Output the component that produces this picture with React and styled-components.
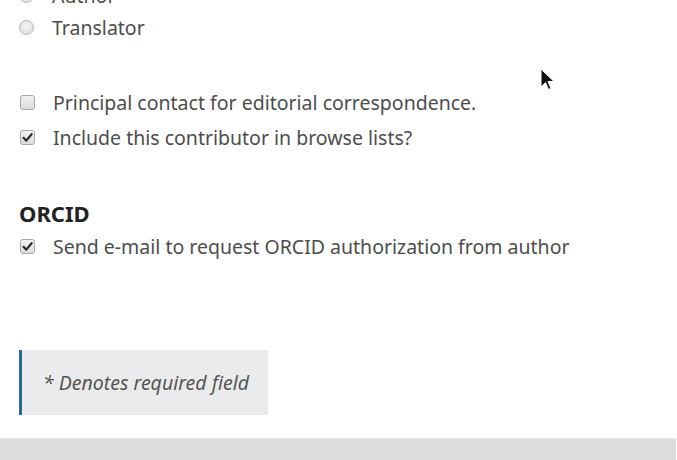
import React from "react";
import styled, { createGlobalStyle } from "styled-components";

const Global = createGlobalStyle`
  html, body { margin: 0; padding: 0; background: #fff; }
  body { font-family: "Noto Sans", "Open Sans", sans-serif; overflow: hidden; }
`;

const Viewport = styled.div`
  position: relative;
  width: 677px;
  height: 460px;
  overflow: hidden;
  background: #fff;
`;

const Content = styled.div`
  width: 676px;
  display: flex;
  flex-direction: column;
  margin-top: -21px;
`;

const Section = styled.div`
  padding-left: 19px;
  display: flex;
  flex-direction: column;
  margin-top: ${(p) => p.$mt || 0}px;
`;

const Row = styled.label`
  display: flex;
  align-items: center;
  gap: 18px;
  height: ${(p) => p.$h || 35}px;
  font-size: 19.5px;
  color: #4d4d4d;
  white-space: nowrap;
`;

const Radio = styled.span`
  width: 15px;
  height: 15px;
  border-radius: 50%;
  border: 1px solid #b9b9b9;
  background: radial-gradient(circle at 50% 40%, #f4f4f4, #d8d8d8);
  box-sizing: border-box;
  flex: none;
`;

const Box = styled.span`
  width: 15px;
  height: 15px;
  border-radius: 3px;
  border: 1px solid #a9a9a9;
  background: linear-gradient(#f2f2f2, #dcdcdc);
  box-sizing: border-box;
  flex: none;
  display: flex;
  align-items: center;
  justify-content: center;
  margin-left: 1px;
`;

const Heading = styled.h3`
  margin: 0;
  font-size: 22px;
  font-weight: 700;
  color: #222;
  height: 29px;
  line-height: 26px;
`;

const Notice = styled.div`
  box-sizing: border-box;
  margin-left: 19px;
  margin-top: ${(p) => p.$mt}px;
  width: 249px;
  height: 65px;
  background: #ebebed;
  border-left: 3px solid #1f6f95;
  display: flex;
  align-items: center;
  padding-left: 21px;
  font-style: italic;
  font-size: 19.5px;
  color: #555;
  white-space: nowrap;
`;

const BottomBar = styled.div`
  margin-top: 23px;
  height: 30px;
  background: #dcdcdc;
  border-top: 1px solid #e4e4e4;
`;

const Cursor = styled.svg`
  position: absolute;
  left: 540px;
  top: 68px;
`;

const Check = () => (
  <svg width="11" height="11" viewBox="0 0 11 11">
    <path d="M1.5 5.8 L4.3 8.6 L9.6 2.2" fill="none" stroke="#2b2b2b" strokeWidth="2.2" strokeLinecap="round" strokeLinejoin="round" />
  </svg>
);

export default function App() {
  return (
    <Viewport>
      <Global />
      <Content>
        <Section>
          <Row $h={32}><Radio />Author</Row>
          <Row $h={32}><Radio />Translator</Row>
        </Section>
        <Section $mt={42}>
          <Row><Box />Principal contact for editorial correspondence.</Row>
          <Row><Box><Check /></Box>Include this contributor in browse lists?</Row>
        </Section>
        <Section $mt={45}>
          <Heading>ORCID</Heading>
          <Row><Box><Check /></Box>Send e-mail to request ORCID authorization from author</Row>
        </Section>
        <Notice $mt={86}>* Denotes required field</Notice>
        <BottomBar />
      </Content>
      <Cursor width="16" height="24" viewBox="0 0 16 24">
        <path d="M1 1 L1 19 L5.5 14.5 L8.5 21.5 L11 20.5 L8 13.5 L14 13.5 Z" fill="#111" stroke="#fff" strokeWidth="1" />
      </Cursor>
    </Viewport>
  );
}
